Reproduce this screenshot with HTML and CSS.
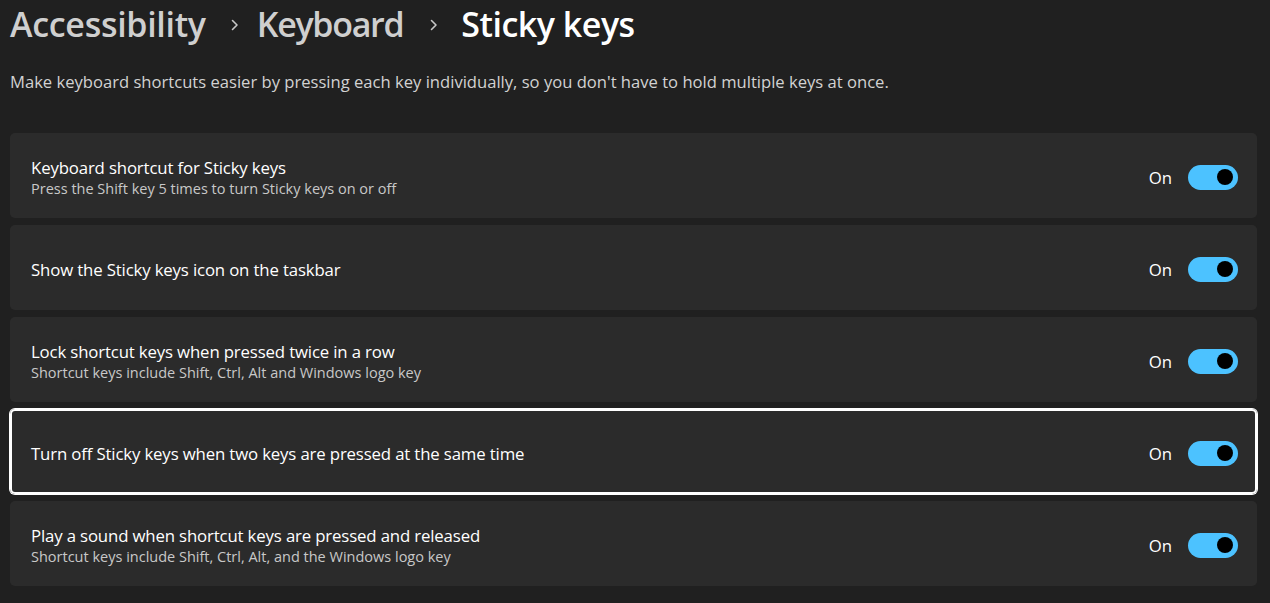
FILE: index.html
```html
<!DOCTYPE html>
<html lang="en">
<head>
<meta charset="utf-8">
<title>Sticky keys</title>
<link rel="stylesheet" href="styles.css">
</head>
<body>
<main class="page">
  <h1 class="breadcrumb">
    <span class="crumb">Accessibility</span>
    <svg class="chev" viewBox="0 0 8 12" width="8" height="12"><polyline points="1.5,1.5 6,6 1.5,10.5" fill="none" stroke="currentColor" stroke-width="1.6" stroke-linecap="round" stroke-linejoin="round"/></svg>
    <span class="crumb kb">Keyboard</span>
    <svg class="chev last" viewBox="0 0 8 12" width="8" height="12"><polyline points="1.5,1.5 6,6 1.5,10.5" fill="none" stroke="currentColor" stroke-width="1.6" stroke-linecap="round" stroke-linejoin="round"/></svg>
    <span class="crumb current">Sticky keys</span>
  </h1>
  <p class="intro">Make keyboard shortcuts easier by pressing each key individually, so you don't have to hold multiple keys at once.</p>

  <div class="list">
    <div class="card">
      <div class="text">
        <div class="title">Keyboard shortcut for Sticky keys</div>
        <div class="sub">Press the Shift key 5 times to turn Sticky keys on or off</div>
      </div>
      <div class="ctrl"><span class="state">On</span><span class="toggle"><span class="knob"></span></span></div>
    </div>
    <div class="card">
      <div class="text">
        <div class="title">Show the Sticky keys icon on the taskbar</div>
      </div>
      <div class="ctrl"><span class="state">On</span><span class="toggle"><span class="knob"></span></span></div>
    </div>
    <div class="card">
      <div class="text">
        <div class="title">Lock shortcut keys when pressed twice in a row</div>
        <div class="sub">Shortcut keys include Shift, Ctrl, Alt and Windows logo key</div>
      </div>
      <div class="ctrl"><span class="state">On</span><span class="toggle"><span class="knob"></span></span></div>
    </div>
    <div class="card focused">
      <div class="text">
        <div class="title">Turn off Sticky keys when two keys are pressed at the same time</div>
      </div>
      <div class="ctrl"><span class="state">On</span><span class="toggle"><span class="knob"></span></span></div>
    </div>
    <div class="card">
      <div class="text">
        <div class="title">Play a sound when shortcut keys are pressed and released</div>
        <div class="sub">Shortcut keys include Shift, Ctrl, Alt, and the Windows logo key</div>
      </div>
      <div class="ctrl"><span class="state">On</span><span class="toggle"><span class="knob"></span></span></div>
    </div>
  </div>
</main>
</body>
</html>
```

FILE: styles.css
```css
html, body {
  margin: 0;
  padding: 0;
  background: #202020;
  height: 100%;
  overflow: hidden;
}
body {
  font-family: "Segoe UI", "Open Sans", "Noto Sans", sans-serif;
  color: #ffffff;
}
.page {
  padding: 0 13px 0 10px;
}
.breadcrumb {
  margin: 0;
  height: 48px;
  display: flex;
  align-items: center;
  font-size: 34px;
  font-weight: 600;
  letter-spacing: -0.3px;
  line-height: 1;
}
.crumb {
  color: #cfcfcf;
}
.crumb.kb {
  letter-spacing: -1.3px;
}
.crumb.current {
  color: #ffffff;
  letter-spacing: -0.5px;
}
.chev {
  color: #c8c8c8;
  margin: 2px 18px 0 25px;
}
.chev.last {
  margin: 2px 23px 0 27px;
}
.intro {
  margin: 23px 0 0 0;
  font-size: 16.6px;
  color: #d2d2d2;
  line-height: 22px;
  letter-spacing: 0;
}
.list {
  margin-top: 40px;
  display: flex;
  flex-direction: column;
  gap: 7px;
}
.card {
  height: 85px;
  box-sizing: border-box;
  background: #2b2b2b;
  border-radius: 5px;
  display: flex;
  align-items: center;
  justify-content: space-between;
  padding: 0 19px 0 21px;
}
.card.focused {
  box-shadow: 0 0 0 1px #ffffff, inset 0 0 0 2px #ffffff;
  border-radius: 5px;
}
.text {
  display: flex;
  flex-direction: column;
  margin-top: 4px;
}
.title {
  font-size: 16.8px;
  line-height: 22px;
  color: #ffffff;
  letter-spacing: -0.15px;
}
.sub {
  font-size: 14.5px;
  line-height: 19px;
  color: #c8c8c8;
  letter-spacing: 0;
}
.ctrl {
  display: flex;
  align-items: center;
  gap: 16px;
  margin-top: 3px;
}
.state {
  font-size: 16.8px;
  color: #ffffff;
}
.toggle {
  width: 50px;
  height: 25px;
  border-radius: 13px;
  background: #4cc2ff;
  display: flex;
  align-items: center;
  justify-content: flex-end;
  padding-right: 5px;
  box-sizing: border-box;
}
.knob {
  width: 16px;
  height: 16px;
  border-radius: 50%;
  background: #000000;
}
```
